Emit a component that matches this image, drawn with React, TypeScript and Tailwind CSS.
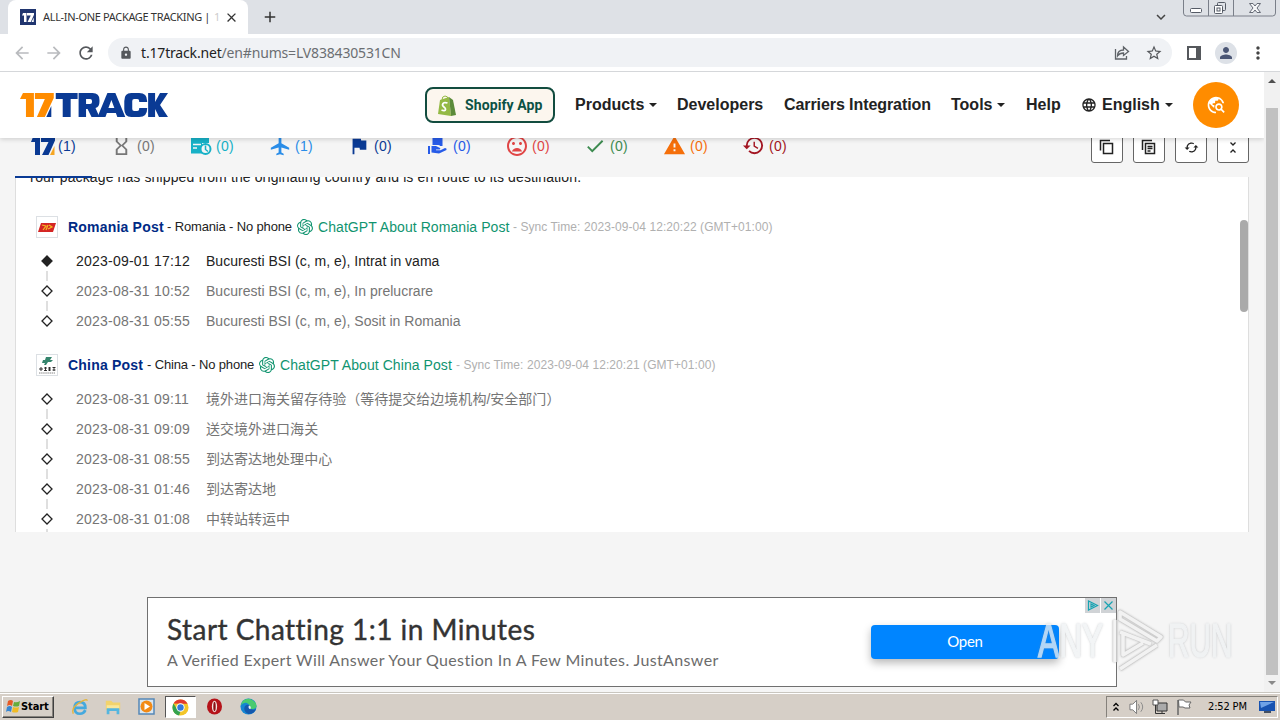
import React from "react";
import {
  MdArrowBack, MdArrowForward, MdRefresh, MdLock, MdStarBorder, MdPerson, MdMoreVert, MdClose, MdAdd,
  MdHourglassEmpty, MdLocalAirport, MdFlag, MdMoodBad, MdCheck, MdWarning, MdHistory,
  MdLanguage, MdTravelExplore, MdExpandMore, MdLoop,
} from "react-icons/md";

const Caret = () => <svg className="ml-[5px] h-1 w-2" viewBox="0 0 8 4"><path d="M0 0h8L4 4z" fill="#222" /></svg>;

const Mark17 = ({ className, main, accent }: { className: string; main: string; accent: string }) => (
  <svg className={className} viewBox="0 0 24 18">
    <path d="M2 0h7v18H4V5H0z" fill={main} />
    <path d="M10 0H24v3.500L17.500 18h-6.500L17.500 5H10z" fill={main} />
    <path d="M23.500 9v9h-4.500z" fill={accent} />
  </svg>
);

const OpenAi = () => (
  <svg className="h-4 w-4 shrink-0" viewBox="0 0 24 24" fill="#10946f">
    <path d="M22.2819 9.8211a5.9847 5.9847 0 0 0-.5157-4.9108 6.0462 6.0462 0 0 0-6.5098-2.9A6.0651 6.0651 0 0 0 4.9807 4.1818a5.9847 5.9847 0 0 0-3.9977 2.9 6.0462 6.0462 0 0 0 .7427 7.0966 5.98 5.98 0 0 0 .511 4.9107 6.051 6.051 0 0 0 6.5146 2.9001A5.9847 5.9847 0 0 0 13.2599 24a6.0557 6.0557 0 0 0 5.7718-4.2058 5.9894 5.9894 0 0 0 3.9977-2.9001 6.0557 6.0557 0 0 0-.7475-7.0729zm-9.022 12.6081a4.4755 4.4755 0 0 1-2.8764-1.0408l.1419-.0804 4.7783-2.7582a.7948.7948 0 0 0 .3927-.6813v-6.7369l2.02 1.1686a.071.071 0 0 1 .038.052v5.5826a4.504 4.504 0 0 1-4.4945 4.4944zm-9.6607-4.1254a4.4708 4.4708 0 0 1-.5346-3.0137l.142.0852 4.783 2.7582a.7712.7712 0 0 0 .7806 0l5.8428-3.3685v2.3324a.0804.0804 0 0 1-.0332.0615L9.74 19.9502a4.4992 4.4992 0 0 1-6.1408-1.6464zM2.3408 7.8956a4.485 4.485 0 0 1 2.3655-1.9728V11.6a.7664.7664 0 0 0 .3879.6765l5.8144 3.3543-2.0201 1.1685a.0757.0757 0 0 1-.071 0l-4.8303-2.7865A4.504 4.504 0 0 1 2.3408 7.872zm16.5963 3.8558L13.1038 8.364 15.1192 7.2a.0757.0757 0 0 1 .071 0l4.8303 2.7913a4.4944 4.4944 0 0 1-.6765 8.1042v-5.6772a.79.79 0 0 0-.407-.667zm2.0107-3.0231l-.142-.0852-4.7735-2.7818a.7759.7759 0 0 0-.7854 0L9.409 9.2297V6.8974a.0662.0662 0 0 1 .0284-.0615l4.8303-2.7866a4.4992 4.4992 0 0 1 6.6802 4.66zM8.3065 12.863l-2.02-1.1638a.0804.0804 0 0 1-.038-.0567V6.0742a4.4992 4.4992 0 0 1 7.3757-3.4537l-.142.0805L8.704 5.459a.7948.7948 0 0 0-.3927.6813zm1.0976-2.3654l2.602-1.4998 2.6069 1.4998v2.9994l-2.5974 1.4997-2.6067-1.4997Z" />
  </svg>
);

const WindowButtons = () => (
  <svg className="absolute right-[3px] top-0 h-[17px] w-[94px]" viewBox="0 0 94 17" fill="none">
    <path d="M.5 0v13q0 3 3 3h86q3 0 3-3V0M25.500 0v16M50.500 0v16" stroke="#7a7f89" />
    <rect x="7.500" y="8.500" width="11" height="4" rx="1" stroke="#555b66" fill="#fff" />
    <rect x="34.500" y="2.500" width="8" height="8" rx="1" stroke="#555b66" />
    <rect x="31.500" y="5.500" width="8" height="8" rx="1" stroke="#555b66" fill="#fff" />
    <rect x="34" y="8" width="3" height="3" stroke="#555b66" />
    <path d="M66.500 3.500h3.500l2 2.500 2-2.500h3.500L74 8l3.500 4.500H74L72 10l-2 2.500h-3.500L70 8z" stroke="#666b76" fill="#f6f7f9" />
  </svg>
);

const TabStrip = () => (
  <div className="relative flex h-[34px] bg-[#dee1e6]">
    <div className="ml-2 flex w-[240px] items-center rounded-t-lg bg-white pl-3">
      <div className="flex h-4 w-4 shrink-0 items-center justify-center bg-[#20356f]"><Mark17 className="h-[9px] w-3" main="#fff" accent="#fff" /></div>
      <div className="ml-[7px] flex w-[176px] items-center whitespace-nowrap font-['Noto_Sans',sans-serif] text-[11px] tracking-[-0.33px] text-[#333]">
        ALL-IN-ONE PACKAGE TRACKING |<span className="ml-1 text-[#ccc]">1</span>
      </div>
      <MdClose className="ml-[5px] h-[15px] w-[15px] shrink-0 text-[#333]" />
    </div>
    <MdAdd className="ml-[13px] mt-2 h-[18px] w-[18px] text-[#333]" />
    <MdExpandMore className="absolute left-[1152px] top-2 h-[18px] w-[18px] text-[#444]" />
    <WindowButtons />
  </div>
);

const Toolbar = () => (
  <div className="flex h-[38px] items-center border-b border-[#d5d7da] bg-white">
    <MdArrowBack className="ml-3 h-5 w-5 text-[#b9bbbe]" />
    <MdArrowForward className="ml-3 h-5 w-5 text-[#b9bbbe]" />
    <MdRefresh className="ml-3 h-5 w-5 text-[#55585c]" />
    <div className="ml-3 flex h-[29px] w-[1064px] items-center rounded-full bg-[#f0f2f5] pl-[11px] pr-[9px]">
      <MdLock className="h-[14px] w-[14px] text-[#55585c]" />
      <div className="ml-2 whitespace-nowrap font-['Noto_Sans',sans-serif] text-sm tracking-[-0.17px] text-[#6b6e72]"><span className="text-[#222]">t.17track.net</span>/en#nums=LV838430531CN</div>
      <svg className="ml-auto h-[18px] w-[18px]" viewBox="0 0 18 18" fill="none" stroke="#5f6368" strokeWidth="1.300"><path d="M2.500 5v10h11v-3M4.500 12q0-6 6-6V3l5 4.500-5 4V9q-4 0-6 3z" /></svg>
      <MdStarBorder className="ml-[14px] h-[18px] w-[18px] text-[#55585c]" />
    </div>
    <svg className="ml-[15px] h-[14px] w-[14px]" viewBox="0 0 14 14"><path d="M1 1h12v12H1z" fill="none" stroke="#55585c" strokeWidth="2" /><path d="M9 0h5v14H9z" fill="#55585c" /></svg>
    <div className="ml-[14px] flex h-[22px] w-[22px] items-center justify-center rounded-full bg-[#dde1e7]"><MdPerson className="h-[18px] w-[18px] text-[#4b5675]" /></div>
    <MdMoreVert className="ml-[11px] h-5 w-5 text-[#444]" />
  </div>
);

const Logo = () => (
  <svg className="ml-5 h-[26px] w-[148px]" viewBox="0 0 149 26">
    <path d="M3 1h11v24H6V7H0z" fill="#ff8c00" /><path d="M15 1h19v5L25 25h-8l8-18H15z" fill="#ff8c00" />
    <path d="M31.500 14v11h-5z" fill="#0a3a94" />
    <g fill="#0a3a94" fillRule="evenodd">
      <path d="M36 1h22v6h-7v18h-8V7h-7z" />
      <path d="M59 1h14q7 0 7 7v2q0 5-4 6l4 9h-8l-4-8h-1.500v8H59zM66.500 7v5h4q2 0 2-2V9q0-2-2-2z" />
      <path d="M88 1h8l10 24h-8l-1.500-4h-9L86 25h-8zM92 8l-3 8h6z" />
      <path d="M112 1h8q8 0 8 8v1h-8V9q0-2-2-2h-3q-2 0-2 2v8q0 2 2 2h3q2 0 2-2v-1h8v1q0 8-8 8h-8q-7 0-7-8V9q0-8 7-8z" />
      <path d="M129 1h7v9l5-9h8l-8 12 8 12h-9l-4-8v8h-7z" />
    </g>
  </svg>
);

const Header = () => (
  <header className="relative z-10 flex h-[66px] shrink-0 items-center bg-white text-base font-bold text-[#222] shadow-[0_1px_5px_rgba(0,0,0,0.18)]">
    <Logo />
    <div className="ml-[257px] flex h-9 w-[130px] items-center rounded-lg border-2 border-[#124c3f] bg-[#fcf6ee] pl-[11px]">
      <svg className="h-[21px] w-[18px]" viewBox="0 0 18 21">
        <path d="M2 5l9-3 2 19-13-2z" fill="#94b944" /><path d="M11 2l4 3 3 15-5 1z" fill="#5c8b3a" /><path d="M4 5q0-4 3-4t3 3" fill="none" stroke="#94b944" />
        <path d="M9.500 8Q5 6.500 4.500 10c0 2 3.500 2 3 4.500Q7 16.500 3.500 15" fill="none" stroke="#fff" strokeWidth="1.800" />
      </svg>
      <span className="ml-[9px] whitespace-nowrap font-['Roboto',sans-serif] text-sm font-bold tracking-[0.1px] text-[#0b5145]">Shopify App</span>
    </div>
    <nav className="ml-5 flex whitespace-nowrap">
      <div className="flex w-[102px] items-center">Products<Caret /></div>
      <div className="w-[107px]">Developers</div>
      <div className="w-[167px] tracking-[-0.08px]">Carriers Integration</div>
      <div className="flex w-[75px] items-center">Tools<Caret /></div>
      <div className="w-[55px]">Help</div>
      <div className="flex w-[112px] items-center"><MdLanguage className="mr-[5px] h-4 w-4" />English<Caret /></div>
    </nav>
    <div className="flex h-[46px] w-[46px] items-center justify-center rounded-full bg-[#ff8c00] text-white"><MdTravelExplore className="h-5 w-5" /></div>
  </header>
);

const ExpiredIcon = () => (
  <svg className="h-[22px] w-[22px]" viewBox="0 0 22 22"><path d="M1 2h18v6H1zM1 8h11v10.500H1z" fill="#17b1c7" /><path d="M3 9.500h8M3 13h4" stroke="#f5f5f5" strokeWidth="1.500" /><circle cx="15.500" cy="14" r="5" fill="#f5f5f5" stroke="#17b1c7" strokeWidth="2" /><path d="M15.500 10.500v4l2.500 2" fill="none" stroke="#17b1c7" strokeWidth="1.500" /></svg>
);
const HandIcon = () => (
  <svg className="h-5 w-5" viewBox="0 0 20 20" fill="#275be8"><path d="M5.500 0h10v10H13q0-1-2-1H5.500zM1 10h2v8H1zM4.500 10H9l4 2q1 1-.5 1.500H9v.8h4.500L18 12q2 0 1.500 2L12 17.500 4.500 16.500z" /></svg>
);

const statuses = [
  { icon: <Mark17 className="h-[18px] w-6" main="#0a3a94" accent="#f5a623" />, n: 1, tone: "text-[#0a3a94]", gap: "gap-[3px]", w: "w-[79px]" },
  { icon: <MdHourglassEmpty className="h-[23px] w-[23px]" />, n: 0, tone: "text-[#777]", gap: "gap-1", w: "w-[80px]" },
  { icon: <ExpiredIcon />, n: 0, tone: "text-[#17b1c7]", gap: "gap-1", w: "w-[79px]" },
  { icon: <MdLocalAirport className="h-[22px] w-[22px]" />, n: 1, tone: "text-[#2a8de8]", gap: "gap-1", w: "w-[79px]" },
  { icon: <MdFlag className="h-[22px] w-[22px]" />, n: 0, tone: "text-[#0a3a94]", gap: "gap-1", w: "w-[79px]" },
  { icon: <HandIcon />, n: 0, tone: "text-[#275be8]", gap: "gap-[6px]", w: "w-[78px]" },
  { icon: <MdMoodBad className="h-[24px] w-[24px]" />, n: 0, tone: "text-[#e04545]", gap: "gap-[3px]", w: "w-[79px]" },
  { icon: <MdCheck className="h-[22px] w-[22px]" />, n: 0, tone: "text-[#3d8b50]", gap: "gap-1", w: "w-[79px]" },
  { icon: <MdWarning className="h-[23px] w-[23px]" />, n: 0, tone: "text-[#f56f0a]", gap: "gap-1", w: "w-[79px]" },
  { icon: <MdHistory className="h-[23px] w-[23px]" />, n: 0, tone: "text-[#a31522]", gap: "gap-[4px]", w: "w-[79px]" },
];

const CopyIcon = () => <svg className="h-4 w-4" viewBox="0 0 16 16" fill="none" stroke="#222" strokeWidth="1.500"><path d="M1.500 11.500V1.500H11M4.500 4.500h9v10h-9z" /></svg>;
const ReportIcon = () => <svg className="h-4 w-4" viewBox="0 0 16 16" fill="none" stroke="#222" strokeWidth="1.500"><path d="M1.500 11V1.500H11M4.500 4.500h9v10h-9zM6.500 7.500h5M6.500 9.500h5M6.500 12h3" /></svg>;
const CollapseIcon = () => <svg className="h-4 w-4" viewBox="0 0 16 16" fill="none" stroke="#222" strokeWidth="1.300"><path d="M5.500 3.500L8 6l2.500-2.500M5.500 13.500L8 11l2.500 2.500" /></svg>;

const StatusBar = () => (
  <div className="relative z-[5] -mt-2 flex h-[47px] shrink-0 bg-[#f5f5f5]">
    <div className="ml-[15px] flex h-[48px] w-[77px] shrink-0 border-b-2 border-[#0a3a94] pl-4 text-sm">
      <div className="mt-1 flex h-[23px]">
        {statuses.map((s, i) => (
          <div key={i} className={`flex shrink-0 items-center whitespace-nowrap tracking-[0.2px] ${s.w} ${s.gap} ${s.tone}`}>{s.icon}({s.n})</div>
        ))}
      </div>
    </div>
    <div className="ml-auto mr-[15px] flex gap-[10px] text-[#222]">
      {[<CopyIcon />, <ReportIcon />, <MdLoop className="h-[15px] w-[15px] rotate-90" />, <CollapseIcon />].map((icon, i) => (
        <div key={i} className="flex h-[33px] w-8 items-center justify-center rounded-[3px] border border-[#666] bg-white pt-px">{icon}</div>
      ))}
    </div>
  </div>
);

type Entry = { time: string; text: string; fresh?: boolean };
const Timeline = ({ items, open }: { items: Entry[]; open?: boolean }) => (
  <div>
    {items.map((e, i) => (
      <div key={e.time} className={`flex h-[30px] whitespace-nowrap text-sm leading-[30px] ${e.fresh ? "text-[#222]" : "text-[#757575]"}`}>
        <svg className="h-[30px] w-[22px] shrink-0" viewBox="0 0 22 30">
          {i > 0 && <path d="M11 0v5" stroke="#d4d4d4" strokeWidth="1.500" />}
          {(open || i < items.length - 1) && <path d="M11 25v5" stroke="#d4d4d4" strokeWidth="1.500" />}
          <path d="M11 10l5 5-5 5-5-5z" stroke="#222" strokeWidth="1.300" fill={e.fresh ? "#222" : "#fff"} />
        </svg>
        <span className="ml-[18px] w-[130px] tracking-[0.22px]">{e.time}</span>
        <span className="tracking-[0.02px]">{e.text}</span>
      </div>
    ))}
  </div>
);

const RomaniaLogo = () => <svg className="h-5 w-5" viewBox="0 0 20 20"><path d="M4 6h15l-3 9H1z" fill="#d42624" /><path d="M5 8l4 1-3 4M11 8l-2 5M12 8l3 2-4 2" fill="none" stroke="#f7bb22" strokeWidth="1.200" /></svg>;
const ChinaLogo = () => <svg className="h-5 w-5" viewBox="0 0 20 20"><path d="M9 2h6l-2 3h3l-2 2h-3l-2 3H7l1-2H5l1-3h2z" fill="#35856d" /><path d="M2 14h4M4 12v4M7 13h3M7 15.500h3M8.500 12v4M11 13h3M11 15h3M12.500 12v4M15.500 12.500h3M15.500 15h3M17 12v4" stroke="#222" strokeWidth=".9" /><path d="M2 18h16" stroke="#888" strokeDasharray="1.500 .6" /></svg>;

const Carrier = ({ logo, name, nameW, rest, restW, gpt, gptW, sync }: { logo: React.ReactNode; name: string; nameW: string; rest: string; restW: string; gpt: string; gptW: string; sync: string }) => (
  <div className="flex h-[22px] items-center whitespace-nowrap text-sm">
    <div className="h-[22px] w-[22px] shrink-0 border border-[#dce0e4]">{logo}</div>
    <span className={`ml-[10px] font-bold tracking-[0.2px] text-[#002a85] ${nameW}`}>{name}</span>
    <span className={`text-[13px] tracking-[-0.15px] text-[#222] ${restW}`}>{rest}</span>
    <OpenAi />
    <span className={`ml-[5px] tracking-[0.07px] text-[#10946f] ${gptW}`}>{gpt}</span>
    <span className="text-xs tracking-[0.07px] text-[#b0b0b0]">{sync}</span>
  </div>
);

const Panel = () => (
  <main className="relative ml-[15px] h-[355px] w-[1234px] shrink-0 overflow-hidden border-x border-[#dedede] bg-white">
    <div className="-mt-2 ml-[11px] h-4 whitespace-nowrap text-sm leading-4 tracking-[0.12px] text-[#222]">Your package has shipped from the originating country and is en route to its destination.</div>
    <div className="ml-5 mt-[31px]">
      <Carrier logo={<RomaniaLogo />} name="Romania Post" nameW="w-[99px]" rest="- Romania - No phone" restW="w-[130px]" gpt="ChatGPT About Romania Post" gptW="w-[195px]" sync="- Sync Time: 2023-09-04 12:20:22 (GMT+01:00)" />
      <div className="mt-2"><Timeline items={[
        { time: "2023-09-01 17:12", text: "Bucuresti BSI (c, m, e), Intrat in vama", fresh: true },
        { time: "2023-08-31 10:52", text: "Bucuresti BSI (c, m, e), In prelucrare" },
        { time: "2023-08-31 05:55", text: "Bucuresti BSI (c, m, e), Sosit in Romania" },
      ]} /></div>
      <div className="mt-[18px]"><Carrier logo={<ChinaLogo />} name="China Post" nameW="w-[79px]" rest="- China - No phone" restW="w-[112px]" gpt="ChatGPT About China Post" gptW="w-[176px]" sync="- Sync Time: 2023-09-04 12:20:21 (GMT+01:00)" /></div>
      <div className="mt-2 font-['Liberation_Sans','Noto_Sans_CJK_SC',sans-serif]"><Timeline open items={[
        { time: "2023-08-31 09:11", text: "境外进口海关留存待验（等待提交给边境机构/安全部门）" },
        { time: "2023-08-31 09:09", text: "送交境外进口海关" },
        { time: "2023-08-31 08:55", text: "到达寄达地处理中心" },
        { time: "2023-08-31 01:46", text: "到达寄达地" },
        { time: "2023-08-31 01:08", text: "中转站转运中" },
      ]} /></div>
    </div>
    <div className="absolute right-0 top-[43px] h-[92px] w-2 rounded-full bg-[#aaa]" />
  </main>
);

const Advert = () => (
  <div className="relative ml-[147px] mt-[65px] flex h-[90px] w-[970px] shrink-0 items-center border border-[#707070] bg-white">
    <div className="ml-[19px] whitespace-nowrap">
      <div className="font-['Lato',sans-serif] text-[28px] leading-[34px] tracking-[0.46px] text-[#333] [-webkit-text-stroke:0.4px_#333]">Start Chatting 1:1 in Minutes</div>
      <div className="mt-[2px] font-['Lato',sans-serif] text-base leading-6 tracking-[0.36px] text-[#6c6c6c]">A Verified Expert Will Answer Your Question In A Few Minutes. JustAnswer</div>
    </div>
    <div className="ml-auto mr-[57px] mt-[-1px] flex h-[34px] w-[188px] items-center justify-center rounded bg-[#0085ff] font-['Lato',sans-serif] text-[15px] tracking-[-0.3px] text-white shadow-[0_4px_8px_rgba(0,0,0,0.28)]">Open</div>
    <svg className="absolute right-0 top-0 h-[15px] w-[31px]" viewBox="0 0 31 15"><path d="M0 0h15v15H0zM16 0h15v15H16z" fill="#d0d3d6" /><path d="M3.500 3v9l9-4.500zM6 6v3l3-1.500zM19.500 3.500l8 8m0-8l-8 8" fill="none" stroke="#16a3b2" strokeWidth="1.200" /></svg>
  </div>
);

const Watermark = () => (
  <div className="absolute left-[1038px] top-[608px] z-20 flex h-[66px] items-center opacity-75">
    <span className="w-[70px] origin-left scale-x-[0.66] whitespace-nowrap text-[48px] text-[#eff2f4] [-webkit-text-stroke:1.5px_#eff2f4] [text-shadow:0_0_3px_#8a8e91]">ANY</span>
    <svg className="ml-[3px] h-[66px] w-[54px] drop-shadow-[0_0_1px_#aaa]" viewBox="0 0 54 66" fill="none"><path d="M9 4l41 25-4 4-37-22zM9 24l31 12M4 12v42M9 61l37-24M12 24v23l20-12" stroke="#c0c0c0" strokeWidth="4.500" strokeLinejoin="round" /><path d="M9 4l41 25-4 4-37-22zM9 24l31 12M4 12v42M9 61l37-24M12 24v23l20-12" stroke="#f1f1f1" strokeWidth="3.500" strokeLinejoin="round" /></svg>
    <span className="ml-[3px] w-[68px] origin-left scale-x-[0.62] whitespace-nowrap text-[48px] text-[#eff1f3] [-webkit-text-stroke:1.5px_#eff1f3] [text-shadow:0_0_3px_#8a8e91]">RUN</span>
  </div>
);

const Scrollbar = () => (
  <div className="flex w-4 flex-col items-center bg-[#f1f1f1]">
    <svg className="h-9 w-4" viewBox="0 0 16 36"><path d="M4 11h8L8 7z" fill="#505050" /></svg>
    <div className="w-3 flex-1 bg-[#c1c1c1]" />
    <svg className="h-[17px] w-4" viewBox="0 0 16 17"><path d="M4 6h8l-4 4z" fill="#8a8a8a" /></svg>
  </div>
);

const Taskbar = () => (
  <div className="flex h-7 items-center border-t border-[#c9c6bf] bg-[#d6cfc7] font-['DejaVu_Sans_Condensed','DejaVu_Sans',sans-serif] text-[11px] text-black shadow-[inset_0_1px_0_#fff]">
    <div className="ml-0.5 mt-px flex h-[22px] w-[52px] items-center border border-b-[#404040] border-l-white border-r-[#404040] border-t-white pl-0.5 font-bold tracking-[-0.1px] shadow-[inset_-1px_-1px_0_#86827c]">
      <svg className="h-4 w-4 shrink-0" viewBox="0 0 16 16"><path d="M3 2q3-2 5 0L7 7Q5 5 2 7z" fill="#e65a26" /><path d="M9 3q3 1 6-1l-1 5q-3 1-6 0z" fill="#66ac3c" /><path d="M2 8q3-2 5 0l-1 5q-3-2-5 0z" fill="#3786d2" /><path d="M8 8q3 1 6 0l-1 5q-3 1-6 0z" fill="#f0bb25" /></svg>
      <span className="whitespace-nowrap">Start</span>
    </div>
    <svg className="ml-4 h-[18px] w-5" viewBox="0 0 20 20" fill="none"><path d="M16 13.500q-2 4-6 4-6 0-6-6.500t6-6.500 6 6.500H5" stroke="#45a9de" strokeWidth="3" /><path d="M2.500 17.500Q0 11 9 5.500t9-2.500" stroke="#e4b43c" strokeWidth="1.500" /></svg>
    <svg className="ml-[14px] h-[18px] w-[18px]" viewBox="0 0 20 20"><path d="M2 3h6l2 2h8v8H2z" fill="#f2d36c" /><path d="M3 8h14v4H3z" fill="#f9e79a" /><path d="M4.500 18v-5h11v5" fill="none" stroke="#55b6df" strokeWidth="3" /></svg>
    <svg className="ml-[16px] h-[17px] w-[17px]" viewBox="0 0 17 17"><path d="M1 1h15v15H1z" fill="#d9e6f0" stroke="#5588b7" strokeWidth="1.500" /><circle cx="8.500" cy="8.500" r="6" fill="#f28a16" /><path d="M6.500 5v7l5.500-3.500z" fill="#fff" /></svg>
    <div className="ml-[10px] mt-px flex h-[22px] w-[31px] items-center justify-center border border-b-white border-l-[#555] border-r-white border-t-[#555] bg-white">
      <svg className="h-[17px] w-[17px]" viewBox="0 0 18 18"><circle cx="9" cy="9" r="8.500" fill="#f3c528" /><path d="M1.600 4.800A8.500 8.500 0 0 1 16.500 5H9z" fill="#e2392f" /><path d="M1.600 4.800 5.500 11l3.500 2-1.500 4.400A8.500 8.500 0 0 1 1.600 4.800z" fill="#34a350" /><circle cx="9" cy="9" r="4.400" fill="#fff" /><circle cx="9" cy="9" r="3.400" fill="#3479dc" /></svg>
    </div>
    <svg className="ml-[10px] h-[17px] w-[17px]" viewBox="0 0 17 17"><ellipse cx="8.500" cy="8.500" rx="7.500" ry="8" fill="#b5131a" /><ellipse cx="8.500" cy="8.500" rx="2.600" ry="5.800" fill="#f3e6e3" /><ellipse cx="8.500" cy="8.500" rx="1.200" ry="4.800" fill="#8b1015" /></svg>
    <svg className="ml-[17px] h-[17px] w-[17px]" viewBox="0 0 18 18"><circle cx="9" cy="9" r="8.500" fill="#1585d2" /><path d="M3 3q5-4 10-1 5 3 4.500 7-1 3-5 3-3 0-2-2 0-4-4-5-3-.5-6 3z" fill="#49cb70" /><path d="M11 11q2 2 6 1-3 5-8 5-6-3-4-8 2-3 5-1z" fill="#1558ad" /><path d="M9.500 8q3 1 1.500 4-3-1-1.500-4z" fill="#e6f0f5" /></svg>
    <div className="ml-auto mr-0.5 mt-px flex h-[22px] w-[172px] items-center border border-b-white border-l-[#85817b] border-r-white border-t-[#85817b]">
      <svg className="ml-[5px] h-3 w-2 shrink-0" viewBox="0 0 8 12" fill="none" stroke="#000" strokeWidth="1.300"><path d="M1.500 5l2.500-2.500L6.500 5M1.500 9.500L4 7l2.500 2.500" /></svg>
      <svg className="ml-[9px] h-4 w-[17px] shrink-0" viewBox="0 0 18 16"><path d="M1 5h3l4-4v14l-4-4H1z" fill="#fff" stroke="#777" /><path d="M10 5q2 3 0 6M12.500 3q4 5 0 10" fill="none" stroke="#888" /></svg>
      <svg className="ml-1.5 h-4 w-4 shrink-0" viewBox="0 0 16 16"><path d="M5 4h10v8H5z" fill="#aaa" stroke="#333" /><path d="M1 1h5v5H1z" fill="#fff" stroke="#555" /><path d="M3.500 6v8.500H13M10 12v2" fill="none" stroke="#333" /></svg>
      <svg className="ml-2 h-4 w-4 shrink-0" viewBox="0 0 16 16"><path d="M2.500 1h5l2 2H15l-2 3 1 3H9L7 8H3z" fill="#fff" stroke="#666" /><path d="M2 1v15" stroke="#666" strokeWidth="1.500" /></svg>
      <span className="ml-[16px] w-[44px] whitespace-nowrap tracking-[-0.15px]">2:52 PM</span>
      <svg className="ml-[7px] h-[14px] w-4 shrink-0" viewBox="0 0 16 14"><path d="M0 1h16v10H0z" fill="#1853b1" /><path d="M1 2h14L2 8z" fill="#6fa2e7" /><path d="M5 11h7v2H5z" fill="#455062" /></svg>
    </div>
  </div>
);

export default function App() {
  return (
    <div className="relative flex h-[720px] w-[1280px] flex-col overflow-hidden bg-[#f5f5f5] font-['Liberation_Sans',Arial,sans-serif]">
      <TabStrip />
      <Toolbar />
      <div className="flex min-h-0 flex-1">
        <div className="flex w-[1264px] flex-col overflow-hidden bg-[#f5f5f5]">
          <Header />
          <StatusBar />
          <Panel />
          <Advert />
        </div>
        <Scrollbar />
      </div>
      <Taskbar />
      <Watermark />
    </div>
  );
}
